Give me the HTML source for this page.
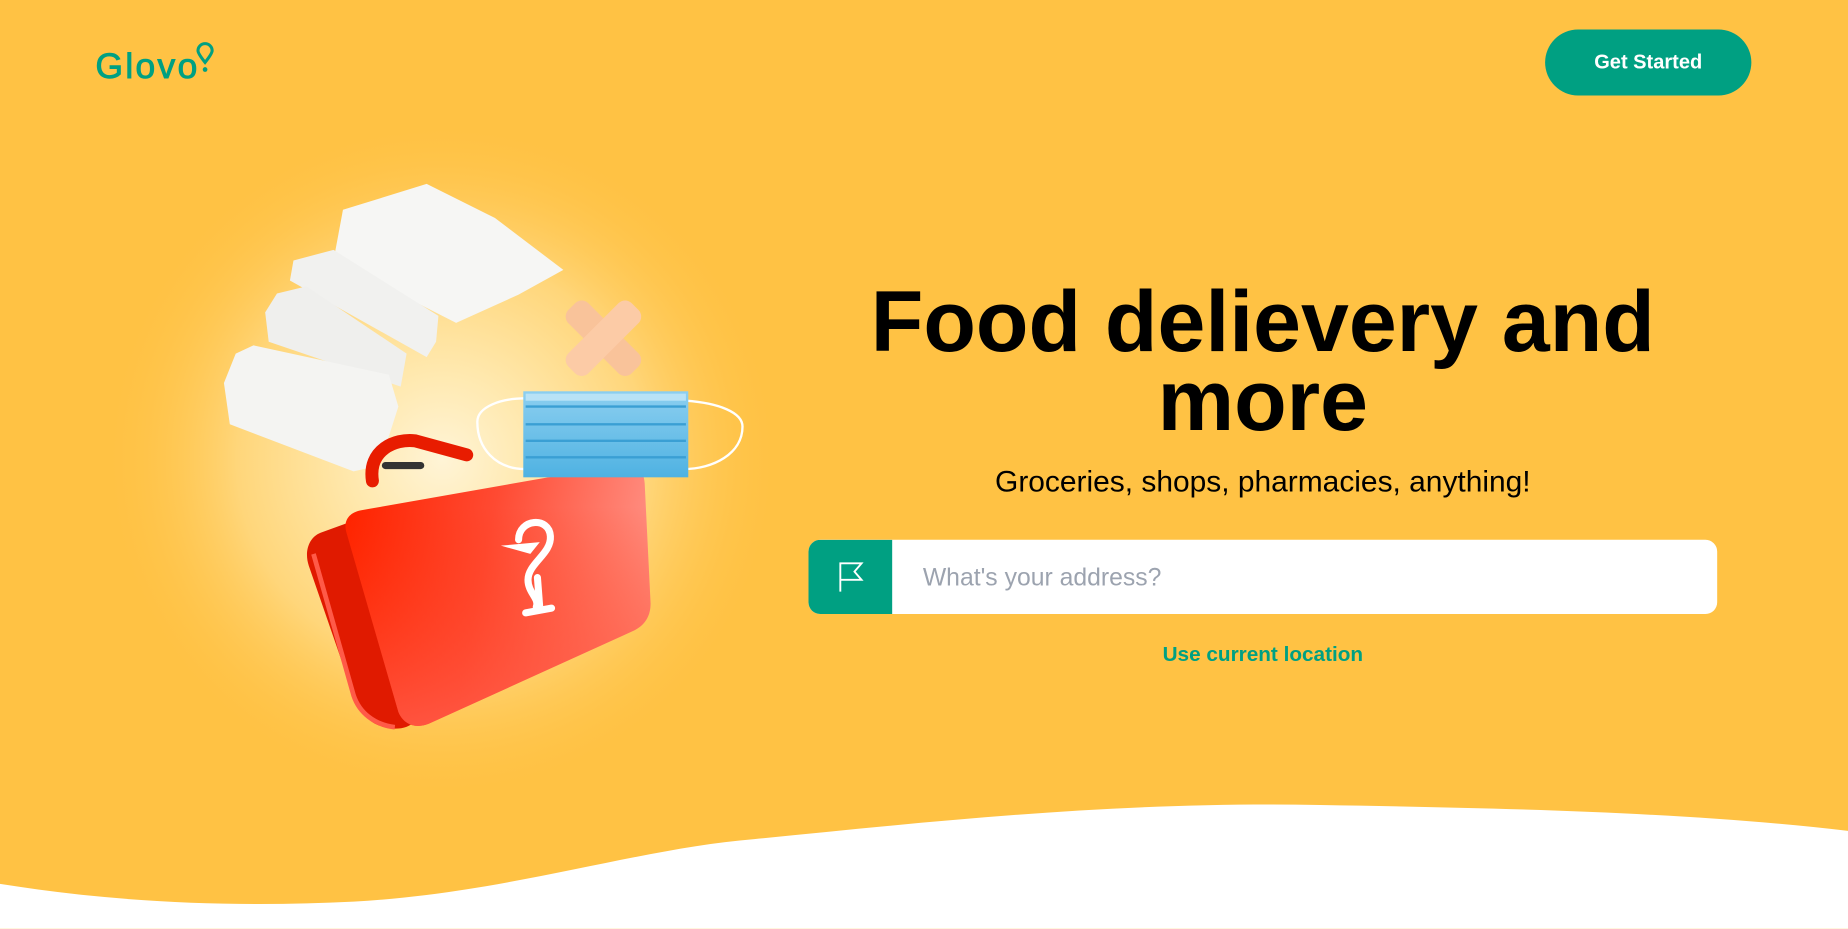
<!DOCTYPE html>
<html><head><meta charset="utf-8"><style>
html,body{margin:0;padding:0;width:1848px;height:928px;overflow:hidden;background:#fff;}
#s{position:absolute;left:0;top:0;width:1568px;height:788px;transform:scale(1.178571);transform-origin:0 0;background:#FFC244;font-family:"Liberation Sans",Arial,sans-serif;overflow:hidden;}
.abs{position:absolute;}
</style></head><body><div id="s">
<svg class="abs" style="left:0;top:0" width="1568" height="788" viewBox="0 0 1568 788">
<defs>
<radialGradient id="glow" cx="375" cy="390" r="290" gradientUnits="userSpaceOnUse">
<stop offset="0" stop-color="#fff4d6"/><stop offset="0.25" stop-color="#ffe9b0"/><stop offset="0.6" stop-color="#ffd67a"/><stop offset="1" stop-color="#FFC244" stop-opacity="0"/></radialGradient>
<linearGradient id="red" x1="300" y1="420" x2="560" y2="470" gradientUnits="userSpaceOnUse">
<stop offset="0" stop-color="#ff2400"/><stop offset="0.45" stop-color="#ff4a32"/><stop offset="1" stop-color="#ff9488"/></linearGradient>
<linearGradient id="redb" x1="0" y1="430" x2="0" y2="620" gradientUnits="userSpaceOnUse">
<stop offset="0" stop-color="#ff2a00" stop-opacity="0"/><stop offset="1" stop-color="#ff5a48" stop-opacity="0.8"/></linearGradient>
<linearGradient id="mask" x1="0" y1="332" x2="0" y2="405" gradientUnits="userSpaceOnUse">
<stop offset="0" stop-color="#8ccff0"/><stop offset="1" stop-color="#4fb2e2"/></linearGradient>
</defs>
<circle cx="375" cy="390" r="290" fill="url(#glow)"/>
<!-- bandage ribbon -->
<path d="M291,178 L362,156 L420,185 L478,229 L440,250 L387,274 L283,221 Z" fill="#f6f6f4"/>
<path d="M249,221 L283,212 L372,268 L370,290 L362,303 L246,238 Z" fill="#f1f1ef"/>
<path d="M235,249 L260,243 L345,300 L340,328 L228,290 L225,265 Z" fill="#efefed"/>
<path d="M200,300 L215,293 L330,318 L338,345 L322,395 L300,400 L195,360 L190,325 Z" fill="#f4f4f2"/>
<!-- plaster -->
<g transform="translate(512,287)"><rect x="-12" y="-38" width="24" height="76" rx="8" fill="#f9c39a" transform="rotate(-45)"/><rect x="-12" y="-38" width="24" height="76" rx="8" fill="#fccba6" transform="rotate(45)"/></g>
<!-- handle -->
<path d="M316,408 C312,382 335,372 352,374 L396,386" stroke="#e81c00" stroke-width="11" fill="none" stroke-linecap="round"/>
<rect x="324" y="392" width="36" height="6" rx="3" fill="#333"/>
<!-- case lid -->
<path d="M272,452 L305,440 L352,612 C345,620 330,620 318,614 C308,608 302,598 300,590 L262,480 C258,468 262,456 272,452 Z" fill="#e01a00"/>
<path d="M266,470 L300,590 C305,605 318,615 335,617" stroke="#ff5a48" stroke-width="4" fill="none"/>
<!-- case front -->
<path d="M306,433 L528,394 C540,392 546,398 547,410 L552,512 C552,522 548,530 538,535 L364,614 C352,619 342,614 338,604 L294,452 C291,442 296,435 306,433 Z" fill="url(#red)"/>
<path d="M306,433 L528,394 C540,392 546,398 547,410 L552,512 C552,522 548,530 538,535 L364,614 C352,619 342,614 338,604 L294,452 C291,442 296,435 306,433 Z" fill="url(#redb)"/>
<!-- symbol -->
<g fill="none" stroke="#fff" stroke-width="6" stroke-linecap="round"><path d="M440,458 C440,440 466,438 467,455 C468,470 448,478 448,492 C448,503 458,508 455,515"/><path d="M456,490 L458,516"/><path d="M446,520 L468,516"/></g>
<path d="M425,463 L458,460 L450,470 Z" fill="#fff"/>
<!-- mask -->
<path d="M446,338 C425,338 405,345 405,358 C405,380 420,398 446,398" stroke="#fff" stroke-width="2" fill="none"/>
<path d="M582,340 C610,342 630,350 630,362 C630,385 605,398 580,398" stroke="#fff" stroke-width="2" fill="none"/>
<rect x="444" y="332" width="140" height="73" fill="url(#mask)"/>
<rect x="446" y="334" width="136" height="6" fill="#b8e2f6"/>
<g stroke="#3a9fd4" stroke-width="2"><line x1="446" y1="345" x2="582" y2="345"/><line x1="446" y1="360" x2="582" y2="360"/><line x1="446" y1="374" x2="582" y2="374"/><line x1="446" y1="388" x2="582" y2="388"/></g>
<!-- wave -->
<path d="M0,750 C100,766 200,770 300,765 C430,758 540,720 640,712 C800,696 950,680 1120,683 C1300,686 1440,690 1568,705 L1568,788 L0,788 Z" fill="#fff"/>
</svg>
<div class="abs" style="left:81px;top:40px;color:#00A082;font-size:30px;letter-spacing:2px;-webkit-text-stroke:0.8px #00A082;">Glovo</div>
<svg class="abs" style="left:164px;top:34px" width="20" height="30" viewBox="0 0 20 30"><path d="M10,19 C6,14 4,11 4,9 A6,6 0 1 1 16,9 C16,11 14,14 10,19 Z" fill="none" stroke="#00A082" stroke-width="2.6"/><circle cx="10" cy="25" r="2" fill="#00A082"/></svg>
<div class="abs" style="left:1311px;top:25px;width:175px;height:56px;border-radius:28px;background:#00A082;color:#fff;font-weight:bold;font-size:17px;line-height:56px;text-align:center;">Get Started</div>
<div class="abs" style="left:686px;top:240px;width:771px;text-align:center;font-weight:bold;font-size:73px;line-height:67px;color:#000;">Food delievery and<br>more</div>
<div class="abs" style="left:686px;top:395px;width:771px;text-align:center;font-size:25.4px;color:#000;">Groceries, shops, pharmacies, anything!</div>
<div class="abs" style="left:686px;top:458px;width:771px;height:63px;border-radius:10px;background:#fff;overflow:hidden;">
<div class="abs" style="left:0;top:0;width:71px;height:63px;background:#00A082;"></div>
<svg class="abs" style="left:24px;top:18px" width="26" height="28" viewBox="0 0 26 28"><path d="M3,26 L3,2 L21,2 L15,9 L21,16 L3,16" fill="none" stroke="#fff" stroke-width="1.6"/></svg>
<div class="abs" style="left:97px;top:1px;line-height:63px;font-size:21px;color:#9ca3af;">What's your address?</div>
</div>
<div class="abs" style="left:686px;top:545px;width:771px;text-align:center;font-weight:bold;font-size:17.6px;color:#00A082;">Use current location</div>
</div></body></html>
